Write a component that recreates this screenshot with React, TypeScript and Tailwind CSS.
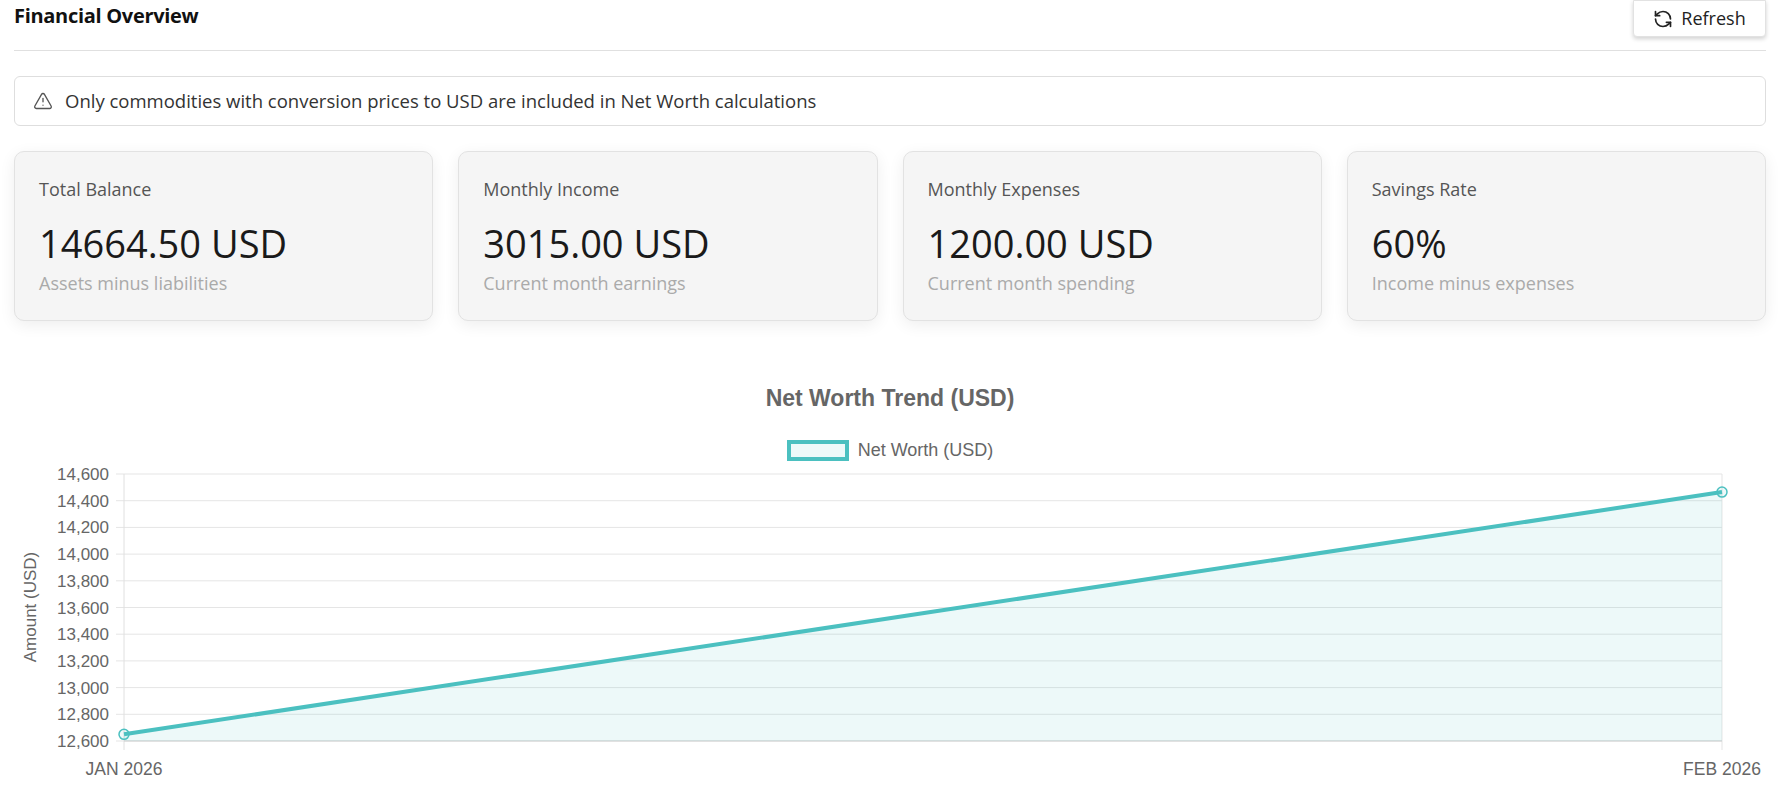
import React from "react";
import { TriangleAlert, RefreshCcw } from "lucide-react";

const cards = [
  { label: "Total Balance", value: "14664.50 USD", sub: "Assets minus liabilities" },
  { label: "Monthly Income", value: "3015.00 USD", sub: "Current month earnings" },
  { label: "Monthly Expenses", value: "1200.00 USD", sub: "Current month spending" },
  { label: "Savings Rate", value: "60%", sub: "Income minus expenses" },
];

const X0 = 124, X1 = 1722, YT = 11, YB = 278;
const yOf = (v: number) => YB - ((v - 12600) / 2000) * (YB - YT);

function Chart() {
  const ticks = Array.from({ length: 11 }, (_, i) => 12600 + i * 200);
  const p1 = { x: X0, y: yOf(12650) };
  const p2 = { x: X1, y: yOf(14464.5) };
  return (
    <svg width="1780" height="325" viewBox="0 0 1780 325" className="block" style={{ fontFamily: "'Liberation Sans', Arial, sans-serif" }}>
      {ticks.map((t) => (
        <g key={t}>
          <line x1={116} x2={X1} y1={yOf(t)} y2={yOf(t)} stroke="#e5e5e5" strokeWidth={1} />
          <text x={109} y={yOf(t) + 6} textAnchor="end" fontSize={17} fill="#666">{t.toLocaleString("en-US")}</text>
        </g>
      ))}
      <line x1={X0} x2={X0} y1={YT} y2={YB + 9} stroke="#e0e0e0" />
      <line x1={X1} x2={X1} y1={YT} y2={YB + 9} stroke="#e5e5e5" />
      <line x1={X0} x2={X1} y1={YB} y2={YB} stroke="#cfcfcf" />
      <polygon points={`${p1.x},${p1.y} ${p2.x},${p2.y} ${X1},${YB} ${X0},${YB}`} fill="rgba(75,192,192,0.1)" />
      <line x1={p1.x} y1={p1.y} x2={p2.x} y2={p2.y} stroke="#4bc0c0" strokeWidth={4} />
      <circle cx={p1.x} cy={p1.y} r={5} fill="rgba(75,192,192,0.1)" stroke="#4bc0c0" strokeWidth={1.5} />
      <circle cx={p2.x} cy={p2.y} r={5} fill="rgba(75,192,192,0.1)" stroke="#4bc0c0" strokeWidth={1.5} />
      <text x={X0} y={312} textAnchor="middle" fontSize={17.5} fill="#666">JAN 2026</text>
      <text x={X1} y={312} textAnchor="middle" fontSize={17.5} fill="#666">FEB 2026</text>
      <text transform="translate(36,144) rotate(-90)" textAnchor="middle" fontSize={17} fill="#666">Amount (USD)</text>
    </svg>
  );
}

export default function App() {
  return (
    <div className="w-[1780px] h-[790px] overflow-hidden bg-white" style={{ fontFamily: "'Open Sans', 'Noto Sans', sans-serif" }}>
      <div className="px-[14px]">
        <div className="flex items-start justify-between h-[51px] border-b border-[#e0e0e0]">
          <h1 className="text-[20px] font-bold text-[#111] mt-[1px] tracking-[-0.3px]">Financial Overview</h1>
          <button className="flex items-center gap-2 h-[37px] w-[133px] justify-center bg-white border border-[#e2e2e2] rounded-b-[4px] shadow-[0_2px_4px_rgba(0,0,0,0.18)] text-[18px] text-[#222]">
            <RefreshCcw size={20} strokeWidth={2} />
            Refresh
          </button>
        </div>
        <div className="mt-[25px] h-[50px] flex items-center gap-3 px-[18px] border border-[#dedede] rounded-[6px] text-[18.5px] text-[#333]">
          <TriangleAlert size={20} strokeWidth={1.6} className="text-[#555]" />
          <span>Only commodities with conversion prices to USD are included in Net Worth calculations</span>
        </div>
        <div className="mt-[25px] grid grid-cols-4 gap-[25px]">
          {cards.map((c) => (
            <div key={c.label} className="h-[170px] bg-[#f5f5f5] border border-[#e2e2e2] rounded-[10px] shadow-[0_4px_16px_rgba(0,0,0,0.07)] px-[24px] pt-[24px]">
              <div className="text-[18px] text-[#555] leading-[26px]">{c.label}</div>
              <div className="text-[38px] font-medium text-[#1a1a1a] leading-[50px] mt-[16px]">{c.value}</div>
              <div className="text-[18px] text-[#aaa] leading-[26px] mt-[2px]">{c.sub}</div>
            </div>
          ))}
        </div>
      </div>
      <div className="mt-[63px] text-center text-[23px] font-bold text-[#666] leading-[28px]" style={{ fontFamily: "'Liberation Sans', Arial, sans-serif" }}>
        Net Worth Trend (USD)
      </div>
      <div className="mt-[28px] flex justify-center items-center gap-[9px] h-[21px]" style={{ fontFamily: "'Liberation Sans', Arial, sans-serif" }}>
        <div className="w-[62px] h-[21px] border-[4px] border-[#4bc0c0] bg-[rgba(75,192,192,0.1)]" />
        <span className="text-[18px] text-[#666]">Net Worth (USD)</span>
      </div>
      <div className="mt-[2px]">
        <Chart />
      </div>
    </div>
  );
}
